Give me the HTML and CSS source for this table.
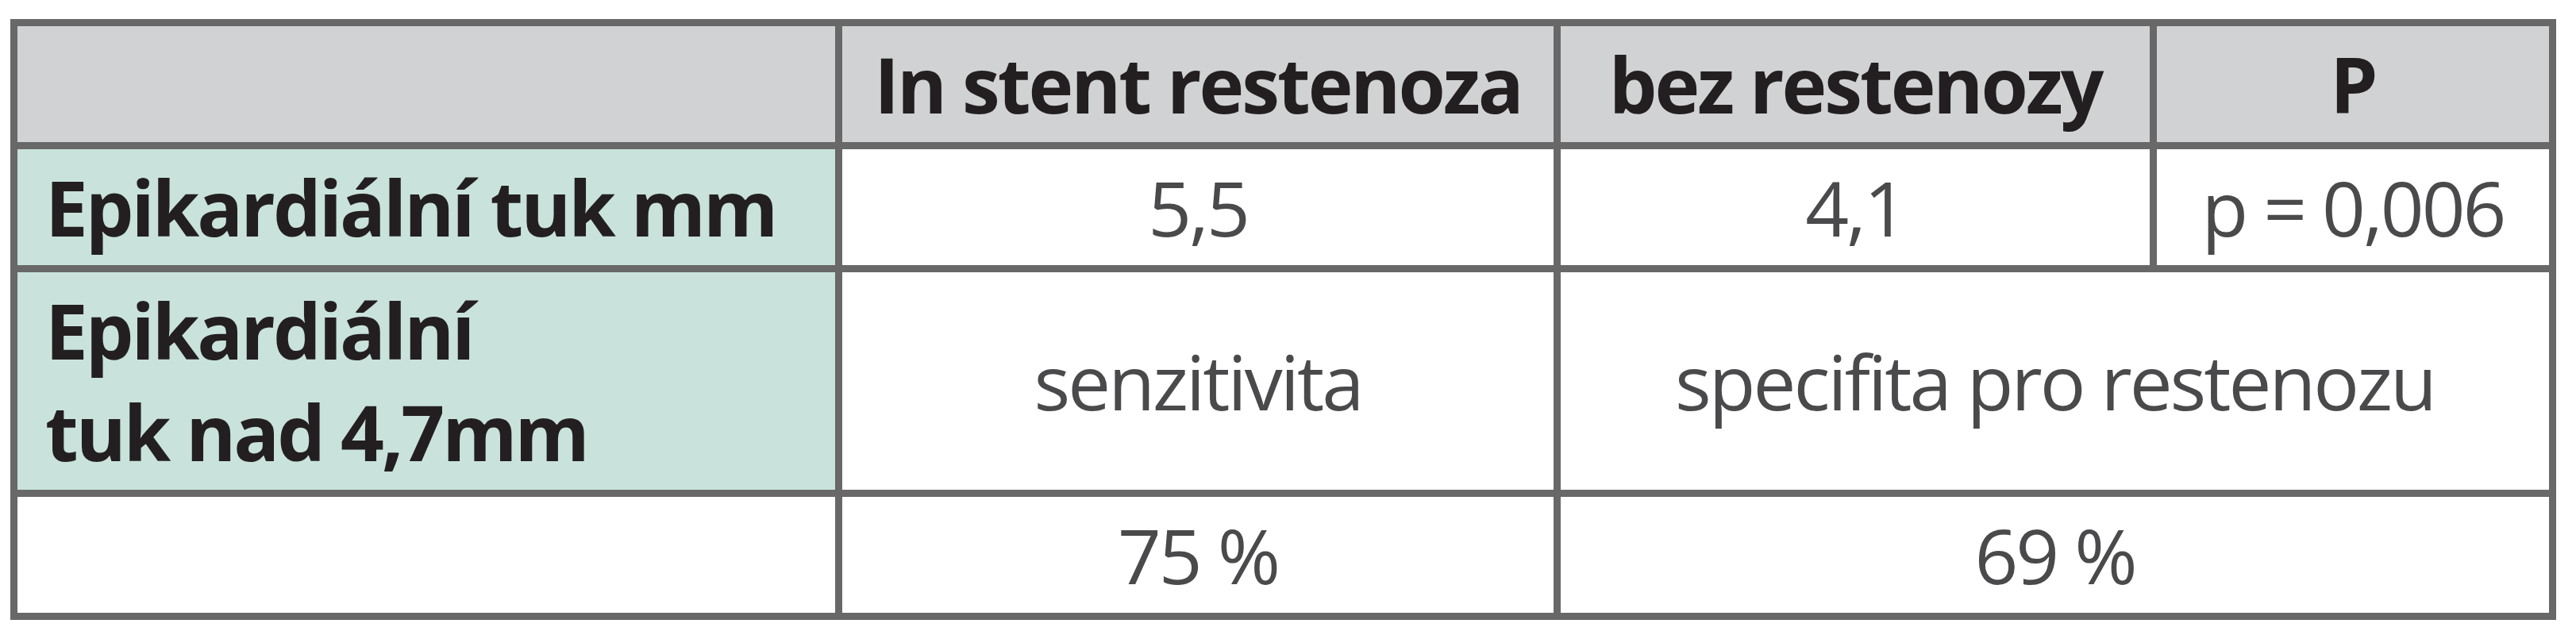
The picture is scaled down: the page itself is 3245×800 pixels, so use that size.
FILE: index.html
```html
<!DOCTYPE html>
<html lang="cs">
<head>
<meta charset="utf-8">
<title>Epikardiální tuk</title>
<link rel="stylesheet" href="styles.css">
</head>
<body>
<table class="grid">
  <colgroup>
    <col class="c1"><col class="c2"><col class="c3"><col class="c4">
  </colgroup>
  <tr class="r-head">
    <th class="head"></th>
    <th class="head">In stent restenoza</th>
    <th class="head">bez restenozy</th>
    <th class="head">P</th>
  </tr>
  <tr class="r-one">
    <td class="label">Epikardiální tuk mm</td>
    <td class="val">5,5</td>
    <td class="val">4,1</td>
    <td class="val">p = 0,006</td>
  </tr>
  <tr class="r-two">
    <td class="label">Epikardiální<br>tuk nad 4,7mm</td>
    <td class="val">senzitivita</td>
    <td class="val" colspan="2">specifita pro restenozu</td>
  </tr>
  <tr class="r-three">
    <td class="blank"></td>
    <td class="val">75 %</td>
    <td class="val" colspan="2">69 %</td>
  </tr>
</table>
</body>
</html>
```

FILE: styles.css
```css
html, body {
  margin: 0;
  padding: 0;
  background: #ffffff;
}

body {
  padding: 24px 0 0 13px;
  font-family: "Open Sans", "Liberation Sans", sans-serif;
}

.grid {
  border-collapse: collapse;
  table-layout: fixed;
  width: 3207px;
}

.c1 { width: 1039px; }
.c2 { width: 905px; }
.c3 { width: 751px; }
.c4 { width: 503px; }

.grid th,
.grid td {
  border: 9px solid #686868;
  padding: 0;
  font-size: 96px;
  line-height: 128px;
  letter-spacing: -3px;
  vertical-align: middle;
}

.r-head { height: 155px; }
.r-one { height: 155px; }
.r-two { height: 283px; }
.r-three { height: 155px; }

.head {
  background: #d1d2d4;
  color: #231f20;
  font-weight: 700;
  text-align: center;
}

.label {
  background: #c9e2dc;
  color: #231f20;
  font-weight: 700;
  text-align: left;
  padding-left: 35px !important;
}

.val {
  background: #ffffff;
  color: #4a4a4c;
  font-weight: 400;
  text-align: center;
}

.blank {
  background: #ffffff;
}
```
